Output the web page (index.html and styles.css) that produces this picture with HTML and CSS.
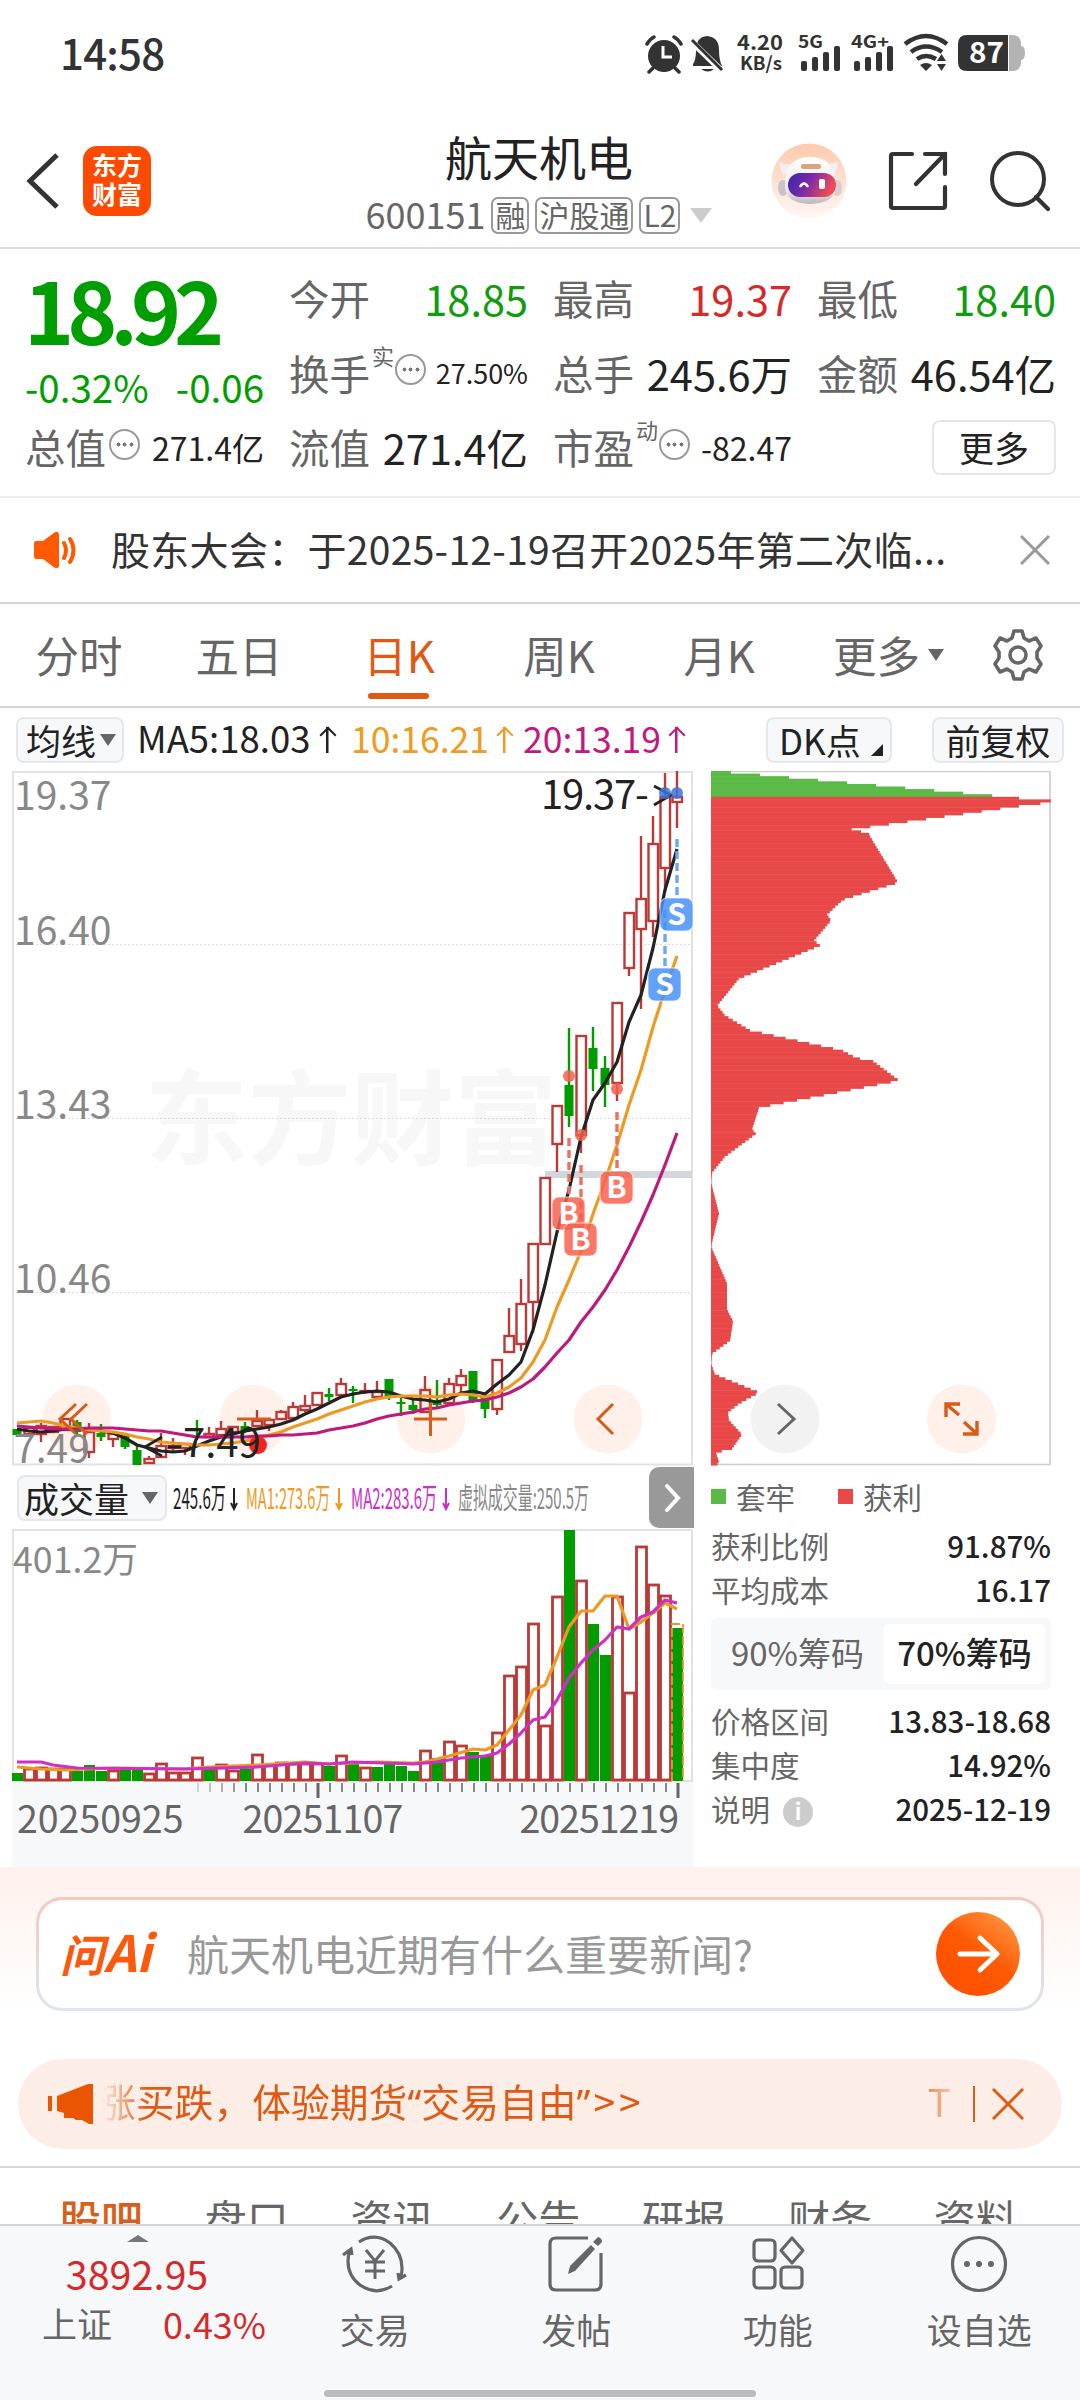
FILE: index.html
```html
<!DOCTYPE html>
<html lang="zh-CN">

<head>
  <meta charset="UTF-8">
  <title>航天机电 600151</title>
  <meta name="viewport" content="width=1080">
  <link rel="stylesheet" href="styles.css">
</head>

<body>

  <!-- Status bar -->
  <div class="status-bar">
    <span class="clock">14:58</span>
    <svg class="status-icons" width="390" height="44" viewBox="0 0 390 44">
      <g fill="#333">
        <circle cx="19" cy="24" r="16"/>
        <path d="M2 12 Q5 7 9 5 M36 12 Q33 7 29 5 M8 36 l-4 4 M30 36 l4 4" stroke="#333" stroke-width="3.5" fill="none" stroke-linecap="round"/>
        <path d="M18 14 V25 H27" stroke="#fff" stroke-width="3" fill="none"/>
        <path d="M48 32 Q51 28 51 18 Q51 5 62 4 Q74 5 74 18 Q74 28 77 34 H48 Z"/>
        <path d="M56 37 H69 Q63 42 56 37 Z"/>
        <path d="M46 9 L77 39" stroke="#fff" stroke-width="6"/>
        <path d="M47 8 L77 38" stroke="#333" stroke-width="3"/>
        <text x="92" y="18" font-size="20" font-weight="700" textLength="46" lengthAdjust="spacingAndGlyphs">4.20</text>
        <text x="95" y="38" font-size="18" font-weight="700" textLength="42" lengthAdjust="spacingAndGlyphs">KB/s</text>
        <text x="153" y="16" font-size="17" font-weight="700" textLength="25" lengthAdjust="spacingAndGlyphs">5G</text>
        <text x="206" y="16" font-size="17" font-weight="700" textLength="38" lengthAdjust="spacingAndGlyphs">4G+</text>
        <rect x="156" y="29" width="6" height="10" rx="2"/>
        <rect x="167" y="25" width="6" height="14" rx="2"/>
        <rect x="178" y="20" width="6" height="19" rx="2"/>
        <rect x="189" y="14" width="6" height="25" rx="2"/>
        <rect x="209" y="29" width="6" height="10" rx="2"/>
        <rect x="220" y="25" width="6" height="14" rx="2"/>
        <rect x="231" y="20" width="6" height="19" rx="2"/>
        <rect x="242" y="14" width="6" height="25" rx="2"/>
        <path d="M260 12 Q281 -4 302 12 M266 20 Q281 9 297 20 M272 27 Q281 21 291 27" fill="none" stroke="#333" stroke-width="4.500"/>
        <path d="M275 33 Q281 29 287 33 L281 39 Z M292 29 l4.500 -7 4.500 7 Z M292 32 l4.500 7 4.500 -7 Z"/>
      </g>
      <path d="M364 3 h3 q9 0 9 9 v2 q4 0 4 7 t-4 7 v2 q0 9 -9 9 h-3 Z" fill="#b3b3b3"/>
      <path d="M322 3 H363 V39 H322 Q313 39 313 30 V12 Q313 3 322 3 Z" fill="#333"/>
      <text x="324" y="31" font-size="28" font-weight="700" fill="#fff" textLength="35" lengthAdjust="spacingAndGlyphs">87</text>
    </svg>
  </div>

  <!-- Header -->
  <header class="header">
    <div class="header-left">
      <svg width="34" height="56" viewBox="0 0 34 56"><path d="M31 2 L4 28 L31 54" fill="none" stroke="#333" stroke-width="5"/></svg>
      <div class="logo">东方<br>财富</div>
    </div>
    <div class="header-title">
      <h1>航天机电</h1>
      <div class="stock-code">
        <span>600151</span>
        <span class="tag">融</span>
        <span class="tag">沪股通</span>
        <span class="tag">L2</span>
        <i class="caret-down"></i>
      </div>
    </div>
    <div class="header-right">
      <svg width="76" height="76" viewBox="0 0 76 76">
        <defs>
          <linearGradient id="robotBg" x1="0" y1="0" x2="0" y2="1"><stop offset="0" stop-color="#ffc9ae"/><stop offset="1" stop-color="#fff8f4"/></linearGradient>
          <linearGradient id="visor" x1="0" y1="0" x2="1" y2="0.3"><stop offset="0" stop-color="#3527a8"/><stop offset="0.5" stop-color="#7a2aa8"/><stop offset="1" stop-color="#ee4b55"/></linearGradient>
          <linearGradient id="shell" x1="0" y1="0" x2="0" y2="1"><stop offset="0" stop-color="#fff"/><stop offset="0.7" stop-color="#ece8ec"/><stop offset="1" stop-color="#bdb6bd"/></linearGradient>
        </defs>
        <circle cx="38" cy="38" r="37.5" fill="url(#robotBg)"/>
        <ellipse cx="12" cy="45" rx="5" ry="8" fill="#c9c3c8"/>
        <ellipse cx="66" cy="45" rx="5" ry="8" fill="#d5ced2"/>
        <path d="M8 18 Q9 27 13 33 L22 22 Q13 22 8 18 Z M67 18 Q67 28 62 33 L55 20 Q63 22 67 18 Z" fill="#f3eff1"/>
        <path d="M14 42 Q14 14 39 14 Q64 14 65 42 Q66 60 39 61 Q13 60 14 42 Z" fill="url(#shell)"/>
        <rect x="17" y="30" width="48" height="24" rx="12" fill="url(#visor)"/>
        <rect x="30" y="21" width="20" height="5" rx="2" fill="#d9a67c"/>
        <path d="M29 44 Q33 37 37 44" fill="none" stroke="#fff" stroke-width="2.5"/>
        <rect x="48" y="36" width="6" height="10" rx="2" fill="#fff"/>
      </svg>
      <svg width="60" height="60" viewBox="0 0 60 60">
        <path d="M24 3 H5 Q3 3 3 5 V55 Q3 57 5 57 H55 Q57 57 57 55 V36 M37 3 H57 V23 M57 3 L28 33" fill="none" stroke="#333" stroke-width="4.2" stroke-linecap="round"/>
      </svg>
      <svg width="62" height="62" viewBox="0 0 62 62">
        <circle cx="29" cy="29" r="26" fill="none" stroke="#333" stroke-width="4"/>
        <path d="M47 47 L59 59" stroke="#333" stroke-width="4.2" stroke-linecap="round"/>
      </svg>
    </div>
  </header>

  <!-- Quote -->
  <section class="quote">
    <div class="price">
      <div class="price-now">18.92</div>
      <div class="price-diff"><span>-0.32%</span><span>-0.06</span></div>
    </div>
    <div class="cell"><label>今开</label><b class="green">18.85</b></div>
    <div class="cell"><label>最高</label><b class="red">19.37</b></div>
    <div class="cell"><label>最低</label><b class="green">18.40</b></div>
    <div class="cell"><label>换手</label><sup>实</sup><i class="dots"></i><b class="xs">27.50%</b></div>
    <div class="cell"><label>总手</label><b>245.6万</b></div>
    <div class="cell"><label>金额</label><b>46.54亿</b></div>
    <div class="cell"><label>总值</label><i class="dots"></i><b class="sm">271.4亿</b></div>
    <div class="cell"><label>流值</label><b>271.4亿</b></div>
    <div class="cell"><label>市盈</label><sup>动</sup><i class="dots"></i><b class="sm">-82.47</b></div>
    <div class="cell cell-more"><button class="more-btn">更多</button></div>
  </section>

  <!-- Notice -->
  <section class="notice">
    <svg width="46" height="38" viewBox="0 0 46 38">
      <path d="M3 10 H10 L22 1 Q26 0 26 4 V34 Q26 38 22 37 L10 28 H3 Q1 28 1 25 V13 Q1 10 3 10 Z" fill="#ff5a00"/>
      <path d="M31 12 Q35 19 31 27 M37 8 Q44 19 37 31" fill="none" stroke="#ff5a00" stroke-width="4" stroke-linecap="round"/>
    </svg>
    <p>股东大会：于2025-12-19召开2025年第二次临...</p>
    <svg width="30" height="30" viewBox="0 0 30 30"><path d="M1 1 L29 29 M29 1 L1 29" stroke="#999" stroke-width="3"/></svg>
  </section>

  <!-- Period tabs -->
  <nav class="periods">
    <a>分时</a>
    <a>五日</a>
    <a class="active">日K</a>
    <a>周K</a>
    <a>月K</a>
    <a class="period-more">更多<i class="caret-down dark"></i></a>
    <svg width="54" height="54" viewBox="0 0 54 54">
      <path d="M23 3 H31 L33 10 L38 13 L45 10 L50 18 L46 24 V30 L50 36 L45 44 L38 41 L33 44 L31 51 H23 L21 44 L16 41 L9 44 L4 36 L8 30 V24 L4 18 L9 10 L16 13 L21 10 Z" fill="none" stroke="#666" stroke-width="3.6" stroke-linejoin="round"/>
      <circle cx="27" cy="27" r="8" fill="none" stroke="#666" stroke-width="3.6"/>
    </svg>
  </nav>

  <!-- MA toolbar -->
  <div class="ma-bar">
    <button class="chip chip-ma">均线<i class="caret-down dark"></i></button>
    <span class="ma ma5">MA5:18.03<i class="up"></i></span>
    <span class="ma ma10">10:16.21<i class="up"></i></span>
    <span class="ma ma20">20:13.19<i class="up"></i></span>
    <button class="chip chip-dk">DK点<i class="corner"></i></button>
    <button class="chip chip-fq">前复权</button>
  </div>

  <!-- Charts -->
  <main class="charts">
    <div class="chart-left">
      <svg id="kline" width="682" height="695" viewBox="0 0 682 695"></svg>
      <div class="vol-bar">
        <button class="chip chip-vol">成交量<i class="caret-down dark"></i></button>
        <svg class="vol-info" width="430" height="60" viewBox="0 0 430 60">
          <text x="0" y="41" fill="#222" textLength="53" lengthAdjust="spacingAndGlyphs">245.6万</text>
          <text x="73" y="41" fill="#f09a20" textLength="84" lengthAdjust="spacingAndGlyphs">MA1:273.6万</text>
          <text x="178" y="41" fill="#cb2fca" textLength="86" lengthAdjust="spacingAndGlyphs">MA2:283.6万</text>
          <text x="285" y="41" fill="#888" textLength="131" lengthAdjust="spacingAndGlyphs">虚拟成交量:250.5万</text>
          <path d="M61 20 V41 M58 35 L61 41 L64 35" stroke="#222"/>
          <path d="M166 20 V41 M163 35 L166 41 L169 35" stroke="#f09a20"/>
          <path d="M273 20 V41 M270 35 L273 41 L276 35" stroke="#cb2fca"/>
        </svg>
        <div class="side-toggle">
          <svg width="20" height="30" viewBox="0 0 20 30"><path d="M4 3 L15 15 L4 27" fill="none" stroke="#fff" stroke-width="4" stroke-linecap="round"/></svg>
        </div>
      </div>
      <svg id="volume" width="682" height="253" viewBox="0 0 682 253"></svg>
      <div class="axis">
        <svg id="ticks" width="682" height="18" viewBox="0 0 682 18"></svg>
        <div class="axis-labels"><span>20250925</span><span>20251107</span><span>20251219</span></div>
      </div>
    </div>

    <div class="chart-right">
      <svg id="chips" width="341" height="695" viewBox="0 0 341 695"></svg>
      <div class="legend">
        <span><i class="sq sq-green"></i>套牢</span>
        <span><i class="sq sq-red"></i>获利</span>
      </div>
      <div class="stat"><span>获利比例</span><b>91.87%</b></div>
      <div class="stat"><span>平均成本</span><b>16.17</b></div>
      <div class="segment">
        <span>90%筹码</span>
        <span class="active">70%筹码</span>
      </div>
      <div class="stat"><span>价格区间</span><b>13.83-18.68</b></div>
      <div class="stat"><span>集中度</span><b>14.92%</b></div>
      <div class="stat"><span>说明<i class="info">i</i></span><b>2025-12-19</b></div>
    </div>
  </main>

  <!-- Ask AI -->
  <section class="ask">
    <div class="ask-box">
      <span class="ask-logo">问<em>Ai</em></span>
      <span class="ask-text">航天机电近期有什么重要新闻?</span>
      <svg width="84" height="84" viewBox="0 0 84 84">
        <defs><linearGradient id="askBtn" x1="0.9" y1="0" x2="0.3" y2="0.8"><stop offset="0" stop-color="#ff9c48"/><stop offset="0.6" stop-color="#ff5a05"/><stop offset="1" stop-color="#ff5200"/></linearGradient></defs>
        <circle cx="42" cy="42" r="42" fill="url(#askBtn)"/>
        <path d="M24 42 H60 M44 26 L61 42 L44 58" fill="none" stroke="#fff" stroke-width="5" stroke-linecap="round" stroke-linejoin="round"/>
      </svg>
    </div>
  </section>

  <!-- Promo -->
  <section class="promo">
    <svg width="46" height="40" viewBox="0 0 46 40">
      <path d="M0 12 H4 V27 H0 Z M9 12 L40 0 H45 V40 H41 L34 36 H28 L25 34 H16 V29 L9 27 Z" fill="#ea5504"/>
    </svg>
    <div class="promo-text"><span>涨买跌，体验期货<q>“</q>交易自由<q>”</q><span class="promo-more">&gt;&gt;</span></span><span class="promo-next">T</span></div>
    <i class="promo-line"></i>
    <svg width="32" height="32" viewBox="0 0 32 32"><path d="M1 1 L31 31 M31 1 L1 31" stroke="#df5a14" stroke-width="3"/></svg>
  </section>

  <!-- Content tabs -->
  <nav class="content-tabs">
    <a class="active">股吧</a>
    <a>盘口</a>
    <a>资讯</a>
    <a>公告</a>
    <a>研报</a>
    <a>财务</a>
    <a>资料</a>
  </nav>

  <!-- Bottom bar -->
  <footer class="bottom">
    <div class="index">
      <i class="caret-up"></i>
      <div class="index-value">3892.95</div>
      <div class="index-row"><span>上证</span><b>0.43%</b></div>
    </div>
    <div class="action">
      <svg width="66" height="58" viewBox="0 0 66 58">
        <path d="M17 7 Q33 -3 48 8 Q60 18 60 33 Q60 40 58 43 M50 51 Q34 61 18 50 Q6 41 6 26 Q6 20 8 15 M1 20 L9 14 L10 20 M64 40 L57 44 L56 38" fill="none" stroke="#666" stroke-width="3.2"/>
        <path d="M24 15 L33 26 L42 15 M33 26 V44 M23 27 H43 M23 36 H43" fill="none" stroke="#666" stroke-width="3"/>
      </svg>
      <span>交易</span>
    </div>
    <div class="action">
      <svg width="58" height="58" viewBox="0 0 58 58">
        <path d="M41 3 H9 Q3 3 3 9 V49 Q3 55 9 55 H48 Q54 55 54 49 V18" fill="none" stroke="#666" stroke-width="3.2"/>
        <path d="M44 10 L48 14 L28 36 L21 39 L23 31 Z M46 7 L51 2 Q55 3 55 7 L51 11 Z" fill="#666"/>
      </svg>
      <span>发帖</span>
    </div>
    <div class="action">
      <svg width="56" height="58" viewBox="0 0 56 58" fill="none" stroke="#666" stroke-width="3.2">
        <rect x="4" y="5" width="21" height="21" rx="4"/>
        <rect x="4" y="32" width="21" height="21" rx="4"/>
        <rect x="31" y="32" width="21" height="21" rx="4"/>
        <path d="M42 3 L53 15.500 L42 28 L31 15.500 Z" stroke-linejoin="round"/>
      </svg>
      <span>功能</span>
    </div>
    <div class="action">
      <svg width="58" height="58" viewBox="0 0 58 58">
        <circle cx="29" cy="29" r="26.500" fill="none" stroke="#666" stroke-width="3.2"/>
        <circle cx="17" cy="29" r="3" fill="#666"/><circle cx="29" cy="29" r="3" fill="#666"/><circle cx="41" cy="29" r="3" fill="#666"/>
      </svg>
      <span>设自选</span>
    </div>
    <div class="home-bar"></div>
  </footer>

  <script src="charts.js"></script>
</body>

</html>
```
FILE: styles.css
```css
* {
  margin: 0;
  padding: 0;
  box-sizing: border-box;
}

body {
  width: 1080px;
  height: 2400px;
  overflow: hidden;
  background: #fff;
  color: #333;
  font-family: "Noto Sans CJK SC", "Noto Sans", sans-serif;
  display: flex;
  flex-direction: column;
}

svg {
  display: block;
  flex: none;
}

svg text {
  font-family: "Noto Sans CJK SC", sans-serif;
}

button {
  font-family: inherit;
  color: #222;
}

i {
  font-style: normal;
}

.caret-down {
  border: 11px solid transparent;
  border-top: 15px solid #ccc;
  border-bottom: 0;
}

.caret-down.dark {
  border-width: 12px 8px 0;
  border-top-color: #666;
}

.green { color: #109c10 !important; }
.red { color: #d62a2a !important; }

/* Status bar */
.status-bar {
  height: 106px;
  padding: 0 50px 0 60px;
  display: flex;
  justify-content: space-between;
  align-items: center;
}

.clock {
  font-size: 42px;
  font-weight: 500;
  line-height: 44px;
  letter-spacing: -0.8px;
  margin-top: -3px;
}

.status-icons {
  margin-right: -5px;
  margin-top: 2px;
}

/* Header */
.header {
  height: 143px;
  border-bottom: 2px solid #ddd;
  display: flex;
  padding: 0 29px 0 26px;
}

.header-left {
  width: 288px;
  display: flex;
  align-items: center;
  gap: 23px;
  padding-top: 8px;
}

.logo {
  width: 68px;
  height: 70px;
  border-radius: 14px;
  background: #fe4a01;
  color: #fff;
  font-size: 25px;
  font-weight: 700;
  line-height: 29px;
  text-align: center;
  padding-top: 4px;
}

.header-title {
  width: 450px;
  text-align: center;
  padding-top: 20px;
}

.header-title h1 {
  font-size: 47px;
  font-weight: 400;
  line-height: 60px;
  color: #222;
}

.stock-code {
  display: flex;
  justify-content: center;
  align-items: center;
  gap: 6px;
  height: 54px;
  margin-top: 2px;
  font-size: 36px;
  color: #666;
  line-height: 36px;
}

.stock-code span:first-child {
  padding-bottom: 4px;
}

.tag {
  height: 37px;
  border: 2px solid #999;
  border-radius: 7px;
  font-size: 30px;
  line-height: 30px;
  padding: 0 2px;
}

.stock-code .caret-down {
  margin-left: 4px;
}

.header-right {
  flex: 1;
  display: flex;
  align-items: center;
  justify-content: flex-end;
  gap: 41px;
  padding-top: 8px;
}

/* Quote */
.quote {
  height: 249px;
  border-bottom: 2px solid #eee;
  padding: 12px 25px 13px;
  display: grid;
  grid-template-columns: repeat(4, 239px);
  grid-template-rows: repeat(3, 74.500px);
  column-gap: 25px;
}

.price {
  grid-row: span 2;
  color: #009e00;
}

.price-now {
  margin-left: -1px;
  padding-top: 2px;
  font-size: 85px;
  font-weight: 700;
  line-height: 90px;
  letter-spacing: -7px;
}

.price-diff {
  display: flex;
  justify-content: space-between;
  font-size: 38.500px;
  line-height: 50px;
  margin-top: 8px;
}

.cell {
  display: flex;
  align-items: center;
  line-height: 60px;
}

.cell label {
  font-size: 40.500px;
  color: #666;
}

.cell b {
  margin-left: auto;
  font-size: 41.500px;
  font-weight: 400;
  color: #222;
}

.cell b.sm { font-size: 32px; }
.cell b.xs { font-size: 27px; }

.cell sup {
  font-size: 22px;
  line-height: 22px;
  color: #666;
  margin: -36px -2px 0 2px;
}

.dots {
  width: 31px;
  height: 31px;
  border: 2px solid #999;
  border-radius: 50%;
  margin: -6px 0 0 3px;
  background: radial-gradient(circle, #777 1.800px, transparent 2.200px) center / 7px 7px no-repeat,
    radial-gradient(circle, #777 1.800px, transparent 2.200px) 4px center / 7px 7px no-repeat,
    radial-gradient(circle, #777 1.800px, transparent 2.200px) 17px center / 7px 7px no-repeat;
}

.cell-more {
  justify-content: flex-end;
}

.more-btn {
  width: 124px;
  height: 55px;
  border: 2px solid #e6e6e6;
  border-radius: 8px;
  background: #fff;
  font-size: 35px;
  line-height: 46px;
}

/* Notice */
.notice {
  height: 106px;
  border-bottom: 2px solid #d6d6d6;
  padding: 0 30px 0 33px;
  display: flex;
  align-items: center;
}

.notice p {
  flex: 1;
  margin-left: 32px;
  font-size: 39px;
  line-height: 50px;
  letter-spacing: 0.3px;
  white-space: nowrap;
  margin-top: -5px;
}

/* Period tabs */
.periods {
  height: 104px;
  border-bottom: 2px solid #d6d6d6;
  padding-right: 35px;
  display: flex;
  align-items: center;
}

.periods a {
  position: relative;
  width: 160px;
  height: 100%;
  text-align: center;
  font-size: 43.500px;
  line-height: 102px;
  color: #666;
}

.periods a:first-child {
  margin-left: -1px;
}

.periods .active {
  color: #df5a14;
}

.periods .active::after {
  content: "";
  position: absolute;
  left: 49px;
  bottom: 7px;
  width: 61px;
  height: 6px;
  border-radius: 3px;
  background: #df5a14;
}

.periods .period-more {
  flex: 1;
  display: flex;
  align-items: center;
  justify-content: flex-start;
  padding-left: 34px;
  gap: 8px;
}

/* MA toolbar */
.ma-bar {
  height: 63px;
  padding: 0 16px;
  display: flex;
  align-items: center;
}

.chip {
  height: 46px;
  border: 2px solid #e6e7ea;
  border-radius: 8px;
  background: #f7f8fa;
  font-size: 35px;
  line-height: 36px;
  display: flex;
  align-items: center;
}

.chip-ma {
  width: 108px;
  padding-left: 8px;
  gap: 4px;
}

.chip-dk {
  width: 126px;
  padding-left: 11px;
  margin-left: auto;
}

.corner {
  border: 6px solid transparent;
  border-right-color: #222;
  border-bottom-color: #222;
  margin: 20px 0 0 10px;
}

.chip-fq {
  width: 132px;
  justify-content: center;
  margin-left: 40px;
}

.ma {
  display: flex;
  align-items: center;
  font-size: 36.500px;
  line-height: 40px;
  height: 46px;
  padding-bottom: 3px;
}

.ma5 { width: 214px; color: #222; margin-left: 13px; }
.ma10 { width: 172px; color: #f09a20; }
.ma20 { width: 172px; color: #c2187f; }

.ma10,
.ma20 {
  font-size: 35.500px;
}

.up {
  width: 16px;
  height: 26px;
  margin: 4px 0 0 9px;
  background: linear-gradient(currentColor, currentColor) center / 2.500px 100% no-repeat;
  position: relative;
}

.ma10 .up,
.ma20 .up {
  margin-left: 7px;
}

.up::before {
  content: "";
  position: absolute;
  left: 3px;
  top: 2px;
  width: 10px;
  height: 10px;
  border: solid currentColor;
  border-width: 2.500px 0 0 2.500px;
  transform: rotate(45deg);
}

/* Charts */
.charts {
  display: flex;
  height: 1096px;
  padding-left: 12px;
}

.chart-left {
  width: 682px;
}

.vol-bar {
  height: 63px;
  display: flex;
  align-items: center;
}

.chip-vol {
  width: 150px;
  margin-left: 5px;
  padding-left: 5px;
  gap: 13px;
}

.vol-info {
  margin-left: 6px;
  font-size: 29px;
}

.vol-info path {
  fill: none;
  stroke-width: 2;
}

.side-toggle {
  width: 45px;
  height: 61px;
  margin-left: auto;
  background: #999;
  border-radius: 10px 0 0 10px;
  display: flex;
  align-items: center;
  padding-left: 14px;
}

.axis {
  height: 85px;
  background: #f7f8fa;
}

.axis-labels {
  display: flex;
  justify-content: space-between;
  padding: 0 16px 0 5px;
  font-size: 37.500px;
  line-height: 33px;
  color: #666;
}

.axis-labels span:nth-child(2) {
  margin-right: 58px;
  letter-spacing: -0.8px;
}

.axis-labels span:nth-child(3) {
  letter-spacing: -1px;
}

.chart-right {
  width: 340px;
  margin-left: 17px;
}

.legend {
  display: flex;
  gap: 43px;
  height: 60px;
  font-size: 29.500px;
  line-height: 56px;
  color: #666;
}

.legend span {
  display: flex;
  align-items: center;
}

.sq {
  width: 15px;
  height: 15px;
  margin-right: 10px;
}

.sq-green { background: #5bb945; }
.sq-red { background: #e84848; }

.stat {
  display: flex;
  justify-content: space-between;
  height: 43.700px;
  font-size: 29.500px;
  line-height: 38px;
  color: #666;
}

.stat b {
  font-weight: 500;
  color: #222;
}

.info {
  display: inline-block;
  width: 30px;
  height: 30px;
  margin-left: 13px;
  border-radius: 50%;
  background: #ccc;
  color: #fff;
  font-size: 22px;
  line-height: 27px;
  text-align: center;
  font-weight: 700;
  vertical-align: 1px;
}

.segment {
  height: 72px;
  margin: 5px 0 11px;
  padding: 6px;
  border-radius: 6px;
  background: #f7f8fa;
  display: flex;
  font-size: 33px;
  line-height: 56px;
  color: #666;
}

.segment span {
  flex: 1;
  text-align: center;
}

.segment span:first-child {
  padding-right: 6px;
}

.segment .active {
  background: #fff;
  border-radius: 6px;
  color: #222;
  font-weight: 500;
}

/* Ask AI */
.ask {
  height: 192px;
  padding: 30px 36px 0;
  background: linear-gradient(#fff1ec, #fff 75%);
}

.ask-box {
  height: 114px;
  border: 3px solid transparent;
  border-radius: 26px;
  background: linear-gradient(#fff, #fff) padding-box, linear-gradient(#f5c8bf, #dde5f1) border-box;
  display: flex;
  align-items: center;
  padding: 0 21px;
}

.ask-logo {
  width: 127px;
  font-size: 44px;
  font-weight: 700;
  font-style: italic;
  line-height: 50px;
  color: #fb5a0c;
  margin-top: -6px;
}

.ask-logo em {
  font-size: 50px;
}

.ask-text {
  flex: 1;
  font-size: 42px;
  line-height: 50px;
  color: #999;
  margin-top: -3px;
}

/* Promo */
.promo {
  height: 90px;
  margin: 0 18px;
  padding: 0 38px 0 30px;
  border-radius: 45px;
  background: #fceee6;
  display: flex;
  align-items: center;
  color: #df5a14;
}

.promo-text {
  flex: 1;
  display: flex;
  justify-content: space-between;
  margin: -6px 22px 0 3px;
  font-size: 38.800px;
  line-height: 50px;
  -webkit-mask-image: linear-gradient(90deg, transparent 5px, #000 50px, #000 810px, transparent 870px);
}

.promo-text q {
  quotes: none;
  font-family: "Noto Sans", sans-serif;
}

.promo-more {
  letter-spacing: 4px;
  margin-left: 3px;
}

.promo-line {
  width: 2px;
  height: 36px;
  background: #df5a14;
  margin-right: 17px;
}

/* Content tabs */
.content-tabs {
  height: 58px;
  margin-top: 17px;
  border-top: 2px solid #d9d9d9;
  padding-left: 28px;
  overflow: hidden;
  display: flex;
}

.content-tabs a {
  flex: 0 0 145.800px;
  text-align: center;
  font-size: 42px;
  line-height: 100px;
  color: #666;
}

.content-tabs .active {
  color: #d8601a;
  font-weight: 500;
}

/* Bottom bar */
.bottom {
  position: relative;
  flex: 1;
  border-top: 2px solid #d4d4d4;
  background: #f7f8fa;
  display: flex;
}

.index {
  width: 274px;
  color: #d62a2a;
}

.caret-up {
  display: block;
  width: 22px;
  margin: 9px 0 0 127px;
  border: 11px solid transparent;
  border-bottom: 7px solid #777;
  border-top: 0;
}

.index-value {
  text-align: center;
  font-size: 39.500px;
  line-height: 50px;
  margin-top: 6px;
}

.index-row {
  display: flex;
  justify-content: space-between;
  padding: 0 8px 0 42px;
  margin-top: 3px;
  font-size: 36px;
  line-height: 44px;
}

.index-row span {
  font-size: 35px;
  color: #666;
}

.index-row b {
  font-weight: 400;
}

.action {
  width: 201.500px;
  display: flex;
  flex-direction: column;
  align-items: center;
  padding-top: 9px;
  font-size: 35px;
  line-height: 44px;
  color: #666;
}

.action span {
  margin-top: 14px;
}

.home-bar {
  position: absolute;
  left: 324px;
  bottom: 3px;
  width: 432px;
  height: 7px;
  border-radius: 4px;
  background: #bbb;
}
```
FILE: charts.js
```javascript
// Bars are 12px apart, the first one is centred at x = 5
const STEP = 12;
const RED = '#b93a36';
const GREEN = '#009c00';
const cx = i => 5 + i * STEP;

// [rising, high, top, bottom, low]
const candles = [
  [0, 658, 658, 664, 666], [1, 655, 657, 663, 666], [1, 652, 655, 663, 671], [1, 656, 656, 661, 661],
  [1, 648, 648, 659, 659], [0, 649, 651, 661, 664], [1, 652, 661, 681, 687], [0, 653, 662, 666, 670],
  [1, 663, 663, 668, 676], [0, 664, 665, 676, 678], [0, 674, 679, 694, 694], [1, 685, 688, 692, 692],
  [1, 662, 675, 686, 686], [1, 667, 675, 677, 680], [1, 672, 673, 677, 684], [0, 649, 665, 667, 669],
  [1, 656, 663, 666, 667], [1, 650, 658, 664, 666], [1, 655, 656, 661, 661], [0, 651, 655, 661, 662],
  [1, 639, 650, 655, 656], [1, 649, 649, 654, 660], [1, 639, 641, 648, 648], [1, 631, 636, 647, 647],
  [1, 624, 635, 639, 641], [1, 622, 622, 634, 634], [0, 617, 623, 626, 630], [1, 607, 613, 624, 624],
  [0, 615, 618, 620, 632], [1, 612, 620, 621, 623], [1, 610, 621, 626, 627], [0, 608, 608, 627, 629],
  [0, 627, 631, 633, 645], [0, 629, 634, 639, 643], [1, 605, 619, 641, 641], [0, 609, 631, 634, 636],
  [1, 607, 613, 632, 632], [1, 598, 605, 614, 621], [0, 600, 600, 630, 632], [0, 621, 626, 638, 647],
  [1, 589, 589, 638, 644], [1, 537, 565, 581, 581], [1, 508, 533, 573, 580], [1, 473, 473, 531, 562],
  [1, 407, 407, 473, 473], [1, 335, 335, 373, 401], [0, 257, 314, 345, 356], [1, 265, 265, 364, 382],
  [0, 256, 277, 298, 320], [0, 285, 297, 314, 336], [1, 232, 232, 312, 330], [1, 142, 142, 197, 205],
  [1, 65, 128, 158, 238], [1, 45, 73, 150, 166], [1, 2, 26, 97, 121], [1, 0, 26, 31, 57]
];

const ma5 = [658, 660, 661, 660, 658, 657, 658, 660, 662, 667, 674, 677, 680, 681, 680, 675, 670, 666, 663,
  660, 658, 656, 653, 649, 643, 638, 632, 626, 623, 621, 620, 621, 625, 628, 629, 631, 628, 622, 620, 623,
  613, 604, 591, 559, 514, 461, 419, 366, 329, 312, 291, 251, 224, 177, 119, 78];
const ma10 = [652, 651, 650, 652, 655, 657, 659, 660, 661, 663, 666, 668, 671, 672, 673, 674, 674, 673, 672,
  670, 667, 664, 661, 656, 652, 648, 643, 639, 635, 631, 628, 626, 625, 625, 625, 626, 624, 623, 624, 626,
  622, 616, 607, 591, 569, 536, 509, 480, 443, 410, 374, 334, 299, 256, 219, 185];
const ma20 = [655, 656, 657, 658, 658, 658, 657, 657, 657, 658, 659, 660, 660, 662, 664, 666, 666, 666, 666,
  666, 665, 665, 664, 664, 663, 662, 659, 657, 655, 652, 648, 645, 643, 641, 638, 637, 634, 632, 630, 629,
  626, 622, 616, 608, 596, 582, 569, 551, 536, 519, 499, 476, 451, 424, 394, 362];

// Bar heights, negative for falling days
const volumes = [-8, 12, 13, 12, 12, -10, -16, -10, 10, -12, -13, 7, 17, 8, 8, 23, -12, 16, 10, -12, 26, 16,
  18, 17, 17, 17, -15, 25, -17, 13, -14, -19, -15, -10, 30, -23, 39, 35, -29, -25, 48, 105, 114, 157, 55, 184,
  -251, 200, -157, -126, 184, 88, 234, 196, 185, -153];
const volMa1 = [[0, 238], [2, 240], [4, 241], [8, 239], [14, 240], [16, 238], [20, 236], [24, 233], [26, 235],
  [30, 233], [33, 234], [34, 233], [36, 227], [38, 220], [39, 221], [40, 216], [41, 201], [42, 186], [43, 161],
  [44, 156], [45, 128], [46, 98], [47, 82], [48, 82], [49, 67], [50, 67], [51, 100], [52, 93], [53, 84], [54, 74], [55, 80]];
const volMa2 = [[0, 233], [2, 233], [3, 236], [5, 239], [14, 240], [20, 238], [24, 234], [26, 235], [28, 233],
  [33, 235], [35, 233], [37, 229], [39, 227], [40, 224], [41, 215], [42, 204], [43, 191], [44, 188], [45, 171],
  [46, 149], [47, 134], [48, 121], [49, 111], [50, 98], [51, 100], [52, 88], [53, 83], [54, 71], [55, 74]];

// Cost distribution, [y, width]
const profile = [[0, 20], [24, 290], [27, 320], [28, 340], [30, 339], [32, 319], [57, 139], [61, 158], [64, 159],
  [110, 187], [127, 132], [142, 116], [148, 120], [168, 103], [173, 109], [206, 28], [233, 6], [243, 14],
  [258, 39], [278, 131], [286, 146], [288, 161], [308, 188], [335, 48], [357, 41], [361, 45], [384, 14],
  [400, 1], [410, 0], [441, 8], [474, 0], [511, 16], [537, 16], [549, 22], [568, 19], [581, 1], [591, 0],
  [602, 4], [620, 48], [631, 28], [640, 17], [648, 18], [662, 31], [676, 21], [680, 5], [690, 8], [694, 4]];

function line(points, color) {
  return `<polyline points="${points.map(p => p.join()).join(' ')}" fill="none" stroke="${color}" stroke-width="3.2" stroke-linejoin="round"/>`;
}

function badge(x, y, letter, color) {
  return `<rect x="${x}" y="${y}" width="33" height="33" rx="7" fill="${color}" fill-opacity="0.85" stroke="#fff" stroke-opacity="0.7"/>
    <text x="${x + 16.5}" y="${y + 27}" font-size="30" font-weight="700" fill="#fff" text-anchor="middle">${letter}</text>`;
}

function dash(x, y1, y2, color) {
  return `<path d="M${x} ${y1} V${y2}" stroke="${color}" stroke-width="3.4" stroke-dasharray="8 4"/>`;
}

function drawKline() {
  let s = '<text x="133" y="386" font-size="103" font-weight="700" fill="#f7f7f7">东方财富</text>';
  s += '<path d="M0 173.500 H680 M0 347.500 H680 M0 521.500 H680" stroke="#dcdcdc" stroke-dasharray="2 2"/>';
  s += '<path d="M1 0 V694 M680 0 V694 M0 1 H681 M0 693.500 H681" stroke="#e2e2e2" stroke-width="2"/>';
  s += '<rect x="533" y="400" width="147" height="7" fill="#d3d6da"/>';
  [65, 242, 419, 596].forEach(x => s += `<circle cx="${x}" cy="648" r="34.500" fill="#fff1ea"/>`);

  candles.forEach(([up, high, top, bottom, low], i) => {
    const x = cx(i), c = up ? RED : GREEN;
    s += `<path d="M${x} ${high} V${top} M${x} ${bottom} V${low}" stroke="${c}" stroke-width="2.4"/>`;
    s += up
      ? `<rect x="${x - 4.5}" y="${top}" width="9.500" height="${Math.max(bottom - top, 1)}" fill="none" stroke="${c}" stroke-width="2.4"/>`
      : `<rect x="${x - 4.5}" y="${top}" width="9" height="${bottom - top}" fill="${c}"/>`;
  });

  s += line(ma5.map((y, i) => [cx(i), y]), '#222');
  s += line(ma10.map((y, i) => [cx(i), y]), '#ed9a24');
  s += line(ma20.map((y, i) => [cx(i), y]), '#bd1a7e');

  s += '<g fill="none" stroke="#d95b18" stroke-width="3"><path d="M64 633 L48 648 L64 663 M75 633 L59 648 L75 663"/>';
  s += '<path d="M225 648 H259 M402 648 H435 M418.500 632 V665 M601 633 L586 648 L601 663"/></g>';

  s += '<g fill="#888" font-size="39">';
  [['19.37', 39], ['16.40', 174], ['13.43', 348], ['10.46', 522], ['7.49', 692]].forEach(([t, y]) => s += `<text x="2" y="${y}">${t}</text>`);
  s += '</g>';

  s += '<circle cx="246" cy="674" r="9" fill="#f4231f"/>';
  s += '<g fill="#222" font-size="40"><text x="529" y="38" textLength="108">19.37-</text><text x="171" y="686">7.49</text></g>';
  s += '<path d="M642 15 L659 24 L642 34 M150 666 L133 676 L150 685 M156 676 H169" fill="none" stroke="#222" stroke-width="2.8"/>';

  s += dash(665, 68, 126, '#6ea5f5') + dash(653, 139, 196, '#6ea5f5');
  s += dash(557, 367, 426, '#f0705e') + dash(569, 394, 453, '#f0705e') + dash(605, 341, 400, '#f0705e');
  [[653, 22], [665, 22]].forEach(p => s += `<circle cx="${p[0]}" cy="${p[1]}" r="6" fill="#3b76dd" fill-opacity="0.85"/>`);
  [[557, 305], [569, 364], [605, 318]].forEach(p => s += `<circle cx="${p[0]}" cy="${p[1]}" r="6" fill="#f2604e" fill-opacity="0.85"/>`);
  s += badge(648, 127, 'S', '#4791fb') + badge(636, 197, 'S', '#4791fb');
  s += badge(540, 426, 'B', '#f8604e') + badge(552, 452, 'B', '#f8604e') + badge(588, 400, 'B', '#f8604e');
  document.getElementById('kline').innerHTML = s;
}

function drawVolume() {
  let s = '<rect x="1" y="1" width="679" height="251" fill="none" stroke="#e2e2e2" stroke-width="2"/>';
  s += '<text x="1" y="44" font-size="36" fill="#888" textLength="125" lengthAdjust="spacingAndGlyphs">401.2万</text>';
  volumes.forEach((v, i) => {
    const h = Math.abs(v), x = cx(i);
    s += v > 0
      ? `<rect x="${x - 4.5}" y="${252 - h}" width="10" height="${h - 1}" fill="#fff" stroke="${RED}" stroke-width="2.8"/>`
      : `<rect x="${x - 5}" y="${252 - h}" width="11" height="${h}" fill="${GREEN}"/>`;
  });
  s += '<path d="M660 252 V95 H671 V252" fill="none" stroke="#ed9a24" stroke-width="1.800" stroke-dasharray="9 3"/>';
  s += line(volMa1.map(([i, y]) => [cx(i), y]), '#ed9a24');
  s += line(volMa2.map(([i, y]) => [cx(i), y]), '#cf30c4');
  document.getElementById('volume').innerHTML = s;

  let t = '';
  for (let i = 15; i < 56; i++) {
    const major = i === 25 || i === 55;
    t += `<path d="M${cx(i) + 1} 1 V${major ? 16 : 10}" stroke="${major ? '#666' : '#888'}" stroke-width="${major ? 3 : 2}" opacity="${Math.min(1, (i - 13) / 6)}"/>`;
  }
  document.getElementById('ticks').innerHTML = t;
}

function drawChips() {
  const row = 2.58;
  let s = '<path d="M0.500 0.500 H339 V693.500 H0.500 Z" fill="none" stroke="#ccc" stroke-width="1.600"/>';
  let k = 0;
  for (let y = 0; y < 693; y += row) {
    while (k < profile.length - 2 && profile[k + 1][0] < y) k++;
    const [y0, w0] = profile[k], [y1, w1] = profile[k + 1];
    const w = w0 + (w1 - w0) * (y - y0) / (y1 - y0);
    s += `<rect x="0" y="${y.toFixed(2)}" width="${w.toFixed(1)}" height="${row + 0.5}" fill="${y < 25 ? '#5bb945' : '#e84848'}"/>`;
  }
  s += '<circle cx="74" cy="648" r="34.500" fill="#f2f2f2"/><path d="M67 633 L83 648 L67 663" fill="none" stroke="#666" stroke-width="3"/>';
  s += '<circle cx="250.500" cy="648" r="34.500" fill="#fff1ea"/>';
  s += '<path d="M248 644 L235 633 M235 646 V633 H249 M253 651 L266 663 M266 650 V663 H252" fill="none" stroke="#d95b18" stroke-width="3.4"/>';
  document.getElementById('chips').innerHTML = s;
}

drawKline();
drawVolume();
drawChips();
```
